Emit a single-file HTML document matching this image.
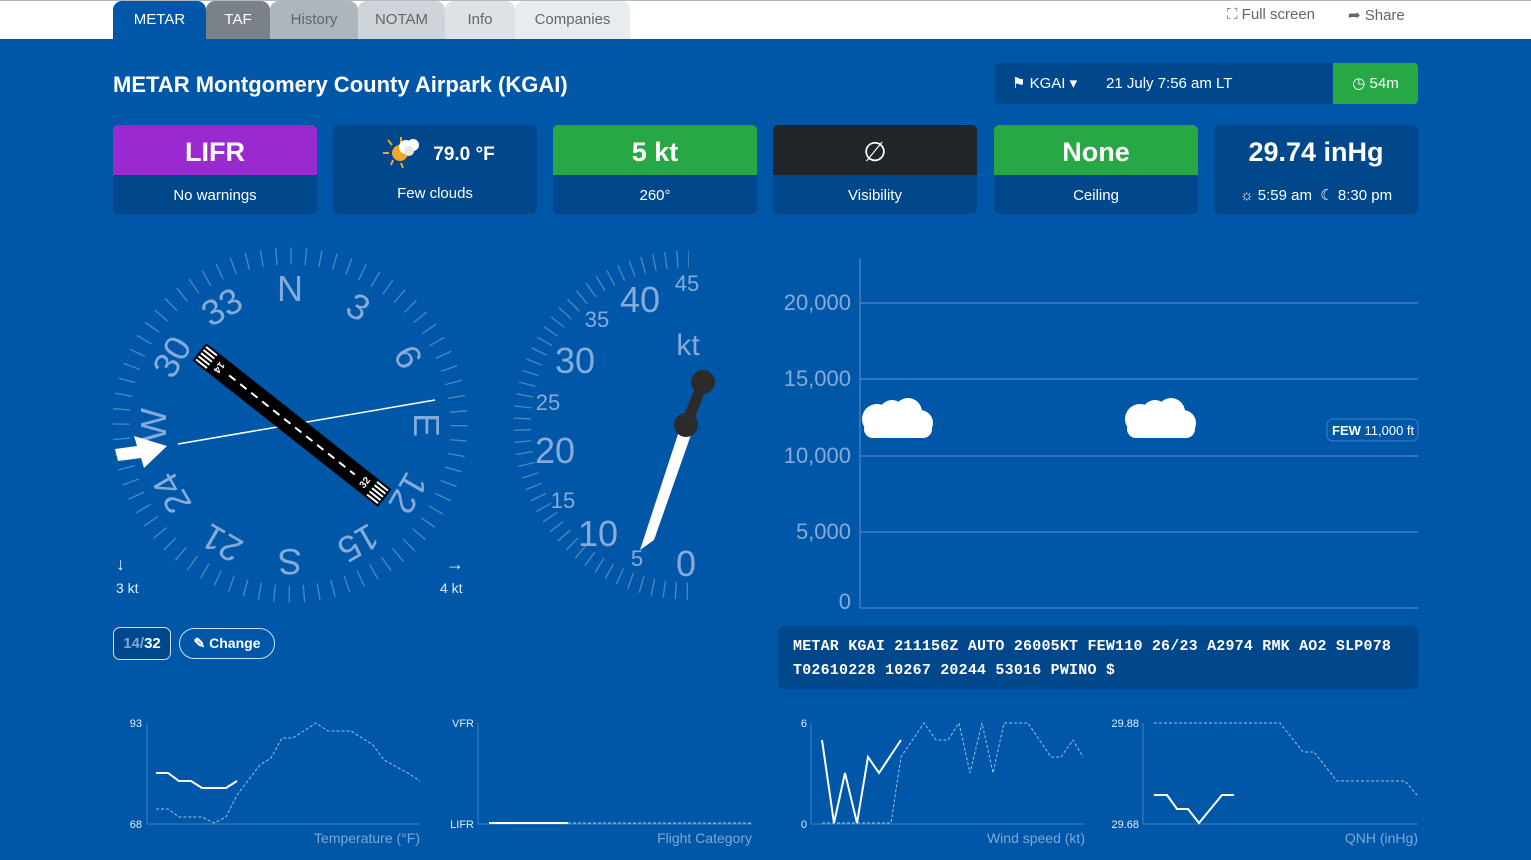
<!DOCTYPE html>
<html><head><meta charset="utf-8"><style>
*{margin:0;padding:0;box-sizing:border-box}
body{width:1531px;height:860px;overflow:hidden;background:#0057a8;font-family:"Liberation Sans",sans-serif;position:relative;color:#fff}
.top{position:absolute;left:0;top:0;width:1531px;height:39px;background:#fff;border-top:1px solid #b0b8c0}
.tab{position:absolute;top:1px;height:38px;border-radius:9px 9px 0 0;font-size:15px;line-height:38px;text-align:center;color:#666}
.tl{position:absolute;top:6px;font-size:15px;color:#666}
.title{position:absolute;left:113px;top:72px;font-size:22px;font-weight:bold}
.bar{position:absolute;left:995px;top:63px;width:423px;height:41px;background:#00478c;border-radius:4px;font-size:15px;line-height:41px}
.card{position:absolute;top:125px;width:204px;height:89px;background:#00478c;border-radius:5px;overflow:hidden;text-align:center}
.card .h{height:50px;font-size:27px;font-weight:bold;line-height:54px}
.card .b{font-size:15px;line-height:42px}
.mt{position:absolute;left:778px;top:626px;width:640px;height:63px;background:#00478c;border-radius:6px;font-family:"Liberation Mono",monospace;font-weight:bold;font-size:15px;line-height:24px;padding:9px 15px;letter-spacing:0.2px}
</style></head><body>
<div class="top"></div>
<div class="tab" style="left:113px;width:93px;background:#0057a8;color:#fff">METAR</div>
<div class="tab" style="left:206px;width:64px;background:#7a8188;color:#fff">TAF</div>
<div class="tab" style="left:270px;width:88px;background:#adb5bd">History</div>
<div class="tab" style="left:358px;width:87px;background:#ced4da">NOTAM</div>
<div class="tab" style="left:445px;width:70px;background:#dee2e6">Info</div>
<div class="tab" style="left:515px;width:115px;background:#e9ecef">Companies</div>
<div class="tl" style="left:1227px">⛶ Full screen</div>
<div class="tl" style="left:1348px">➦ Share</div>
<div class="title">METAR Montgomery County Airpark (KGAI)</div>
<div class="bar"><span style="position:absolute;left:17px">⚑ KGAI ▾</span><span style="position:absolute;left:111px">21 July 7:56 am LT</span><span style="position:absolute;left:338px;width:85px;height:41px;background:#28a745;border-radius:0 4px 4px 0;text-align:center">◷ 54m</span></div>
<div class="card" style="left:113px"><div class="h" style="background:#9a2ad0">LIFR</div><div class="b">No warnings</div></div>
<div class="card" style="left:333px"><div class="h" style="font-size:19px;padding-left:58px;line-height:60px">79.0 °F</div><div class="b" style="line-height:38px">Few clouds</div>
<svg style="position:absolute;left:48px;top:10px" width="46" height="34"><g stroke="#f5a623" stroke-width="2"><line x1="2" y1="18" x2="8" y2="18"/><line x1="7" y1="5" x2="11" y2="10"/><line x1="20" y1="2" x2="20" y2="8"/><line x1="10" y1="30" x2="12" y2="25"/><line x1="22" y1="33" x2="20" y2="28"/></g><circle cx="19" cy="18" r="8" fill="#f5a623"/><circle cx="25" cy="12" r="7" fill="#fff"/><circle cx="32" cy="10" r="6" fill="#fff"/><circle cx="28" cy="16" r="5" fill="#e8e8e8"/></svg></div>
<div class="card" style="left:553px"><div class="h" style="background:#28a745">5 kt</div><div class="b">260°</div></div>
<div class="card" style="left:773px"><div class="h" style="background:#212529;font-weight:normal">∅</div><div class="b">Visibility</div></div>
<div class="card" style="left:994px"><div class="h" style="background:#28a745">None</div><div class="b">Ceiling</div></div>
<div class="card" style="left:1214px"><div class="h">29.74 inHg</div><div class="b">☼ 5:59 am &nbsp;☾ 8:30 pm</div></div>

<svg style="position:absolute;left:0;top:0" width="1531" height="860">
<defs><clipPath id="lh"><rect x="400" y="200" width="289" height="450"/></clipPath></defs>
<g fill="none" stroke="rgba(255,255,255,0.3)">
<circle cx="290" cy="425" r="169" stroke-width="17" stroke-dasharray="1.3 13.45"/>
<g clip-path="url(#lh)"><circle cx="688" cy="425" r="166" stroke-width="17" stroke-dasharray="1.3 10.29" transform="rotate(90 688 425)"/></g>
</g>
<g fill="#86abdb" font-size="36" text-anchor="middle" font-family="Liberation Sans,sans-serif">
<text x="290" y="301" transform="rotate(0 290 425)">N</text>
<text x="290" y="301" transform="rotate(30 290 425)">3</text>
<text x="290" y="301" transform="rotate(60 290 425)">6</text>
<text x="290" y="301" transform="rotate(90 290 425)">E</text>
<text x="290" y="301" transform="rotate(120 290 425)">12</text>
<text x="290" y="301" transform="rotate(150 290 425)">15</text>
<text x="290" y="301" transform="rotate(180 290 425)">S</text>
<text x="290" y="301" transform="rotate(210 290 425)">21</text>
<text x="290" y="301" transform="rotate(240 290 425)">24</text>
<text x="290" y="301" transform="rotate(270 290 425)">W</text>
<text x="290" y="301" transform="rotate(300 290 425)">30</text>
<text x="290" y="301" transform="rotate(330 290 425)">33</text>
</g>
<g fill="#86abdb" font-family="Liberation Sans,sans-serif" text-anchor="middle">
<text x="686" y="576" font-size="36">0</text>
<text x="637" y="566" font-size="22">5</text>
<text x="598" y="546" font-size="36">10</text>
<text x="563" y="508" font-size="22">15</text>
<text x="555" y="463" font-size="36">20</text>
<text x="548" y="410" font-size="22">25</text>
<text x="575" y="373" font-size="36">30</text>
<text x="597" y="327" font-size="22">35</text>
<text x="640" y="312" font-size="36">40</text>
<text x="687" y="291" font-size="22">45</text>
<text x="688" y="355" font-size="30">kt</text>
</g>
<line x1="178" y1="444" x2="435" y2="400" stroke="#fff" stroke-width="1.5"/>
<polygon points="115,449 137,446 134,436 167,446 144,468 141,458 118,461" fill="#fff"/>
<g transform="translate(292,425) rotate(38.3)">
<rect x="-118" y="-11" width="236" height="22" fill="#000"/>
<g fill="#fff"><rect x="-116" y="-9" width="14" height="2"/><rect x="-116" y="-5" width="14" height="2"/><rect x="-116" y="-1" width="14" height="2"/><rect x="-116" y="3" width="14" height="2"/><rect x="-116" y="7" width="14" height="2"/>
<rect x="102" y="-9" width="14" height="2"/><rect x="102" y="-5" width="14" height="2"/><rect x="102" y="-1" width="14" height="2"/><rect x="102" y="3" width="14" height="2"/><rect x="102" y="7" width="14" height="2"/></g>
<line x1="-80" y1="0" x2="80" y2="0" stroke="#fff" stroke-width="2" stroke-dasharray="8 6"/>
<text x="-92" y="4" fill="#fff" font-size="10" font-weight="bold" text-anchor="middle" transform="rotate(90 -92 0)">14</text>
<text x="92" y="4" fill="#fff" font-size="10" font-weight="bold" text-anchor="middle" transform="rotate(-90 92 0)">32</text>
</g>
<g fill="#e0ecf8" font-size="14" font-family="Liberation Sans,sans-serif"><text x="116" y="593">3 kt</text><text x="440" y="593">4 kt</text><text x="116" y="570" font-size="18">↓</text><text x="446" y="570" font-size="18">→</text></g>
<polygon points="640,550 680,428 692,432 654,540" fill="#fff"/>
<line x1="686" y1="425" x2="703" y2="382" stroke="#2b2b2b" stroke-width="11" stroke-linecap="round"/>
<circle cx="686" cy="425" r="12" fill="#2b2b2b"/><circle cx="703" cy="382" r="12" fill="#2b2b2b"/>
<g stroke="#3f7fc4" stroke-width="1.5"><line x1="860" y1="258" x2="860" y2="608"/><line x1="860" y1="303" x2="1418" y2="303"/><line x1="860" y1="379" x2="1418" y2="379"/><line x1="860" y1="456" x2="1418" y2="456"/><line x1="860" y1="532" x2="1418" y2="532"/><line x1="860" y1="608" x2="1418" y2="608"/></g>
<g fill="#86abdb" font-size="22" text-anchor="end" font-family="Liberation Sans,sans-serif"><text x="851" y="310">20,000</text><text x="851" y="386">15,000</text><text x="851" y="463">10,000</text><text x="851" y="539">5,000</text><text x="851" y="609">0</text></g>
<g id="cl" fill="#fff"><circle cx="877" cy="419" r="15"/><circle cx="892" cy="413" r="13"/><circle cx="908" cy="412" r="14"/><circle cx="920" cy="423" r="13"/><rect x="864" y="420" width="68" height="18" rx="9"/></g>
<use href="#cl" transform="translate(263,0)"/>
<rect x="1327" y="419" width="91" height="22" rx="6" fill="none" stroke="#3f7fc4"/>
<text x="1332" y="435" fill="#fff" font-size="13" font-family="Liberation Sans,sans-serif"><tspan font-weight="bold">FEW</tspan> 11,000 ft</text>
<g stroke="#3f7fc4" stroke-width="1"><polyline fill="none" points="147,723 147,824 420,824"/><polyline fill="none" points="478,723 478,824 752,824"/><polyline fill="none" points="811,723 811,824 1085,824"/><polyline fill="none" points="1143,723 1143,824 1418,824"/></g>
<g fill="#e0ecf8" font-size="11" text-anchor="end" font-family="Liberation Sans,sans-serif"><text x="142" y="727">93</text><text x="142" y="828">68</text><text x="474" y="727">VFR</text><text x="474" y="828">LIFR</text><text x="807" y="727">6</text><text x="807" y="828">0</text><text x="1139" y="727">29.88</text><text x="1139" y="828">29.68</text></g>
<g fill="#7ea7d8" font-size="14" text-anchor="end" font-family="Liberation Sans,sans-serif"><text x="420" y="843">Temperature (°F)</text><text x="752" y="843">Flight Category</text><text x="1085" y="843">Wind speed (kt)</text><text x="1418" y="843">QNH (inHg)</text></g>
<g fill="none" stroke="#9cc0e8" stroke-width="1" stroke-dasharray="3 2">
<polyline points="156,809 168,809 179,817 202,817 214,823 226,817 237,795 260,765 271,758 282,738 293,738 316,723 328,731 351,731 373,745 384,760 408,773 420,781"/>
<polyline points="568,823 752,823"/>
<polyline points="822,823 891,823 901,757 924,723 936,740 948,740 959,723 970,773 982,723 993,773 1004,723 1028,723 1051,757 1061,757 1073,740 1083,757"/>
<polyline points="1154,723 1280,723 1303,752 1314,752 1337,781 1405,781 1417,795"/>
</g>
<g fill="none" stroke="#fff" stroke-width="2">
<polyline points="156,773 168,773 179,781 191,781 202,788 226,788 237,781"/>
<polyline points="489,823 568,823"/>
<polyline points="822,740 834,823 845,773 857,823 868,757 879,773 901,740"/>
<polyline points="1154,795 1167,795 1177,809 1188,809 1199,823 1222,795 1234,795"/>
</g>
</svg>
<div style="position:absolute;left:113px;top:627px;width:58px;height:33px;border:1px solid #cfe0f3;border-radius:7px;background:#00478c;font-weight:bold;font-size:15px;line-height:31px;text-align:center"><span style="color:#7ea7d8">14/</span>32</div>
<div style="position:absolute;left:179px;top:628px;width:96px;height:31px;border:1px solid #cfe0f3;border-radius:16px;font-weight:bold;font-size:14px;line-height:29px;text-align:center">✎ Change</div>
<div class="mt">METAR KGAI 211156Z AUTO 26005KT FEW110 26/23 A2974 RMK AO2 SLP078<br>T02610228 10267 20244 53016 PWINO $</div>
</body></html>
